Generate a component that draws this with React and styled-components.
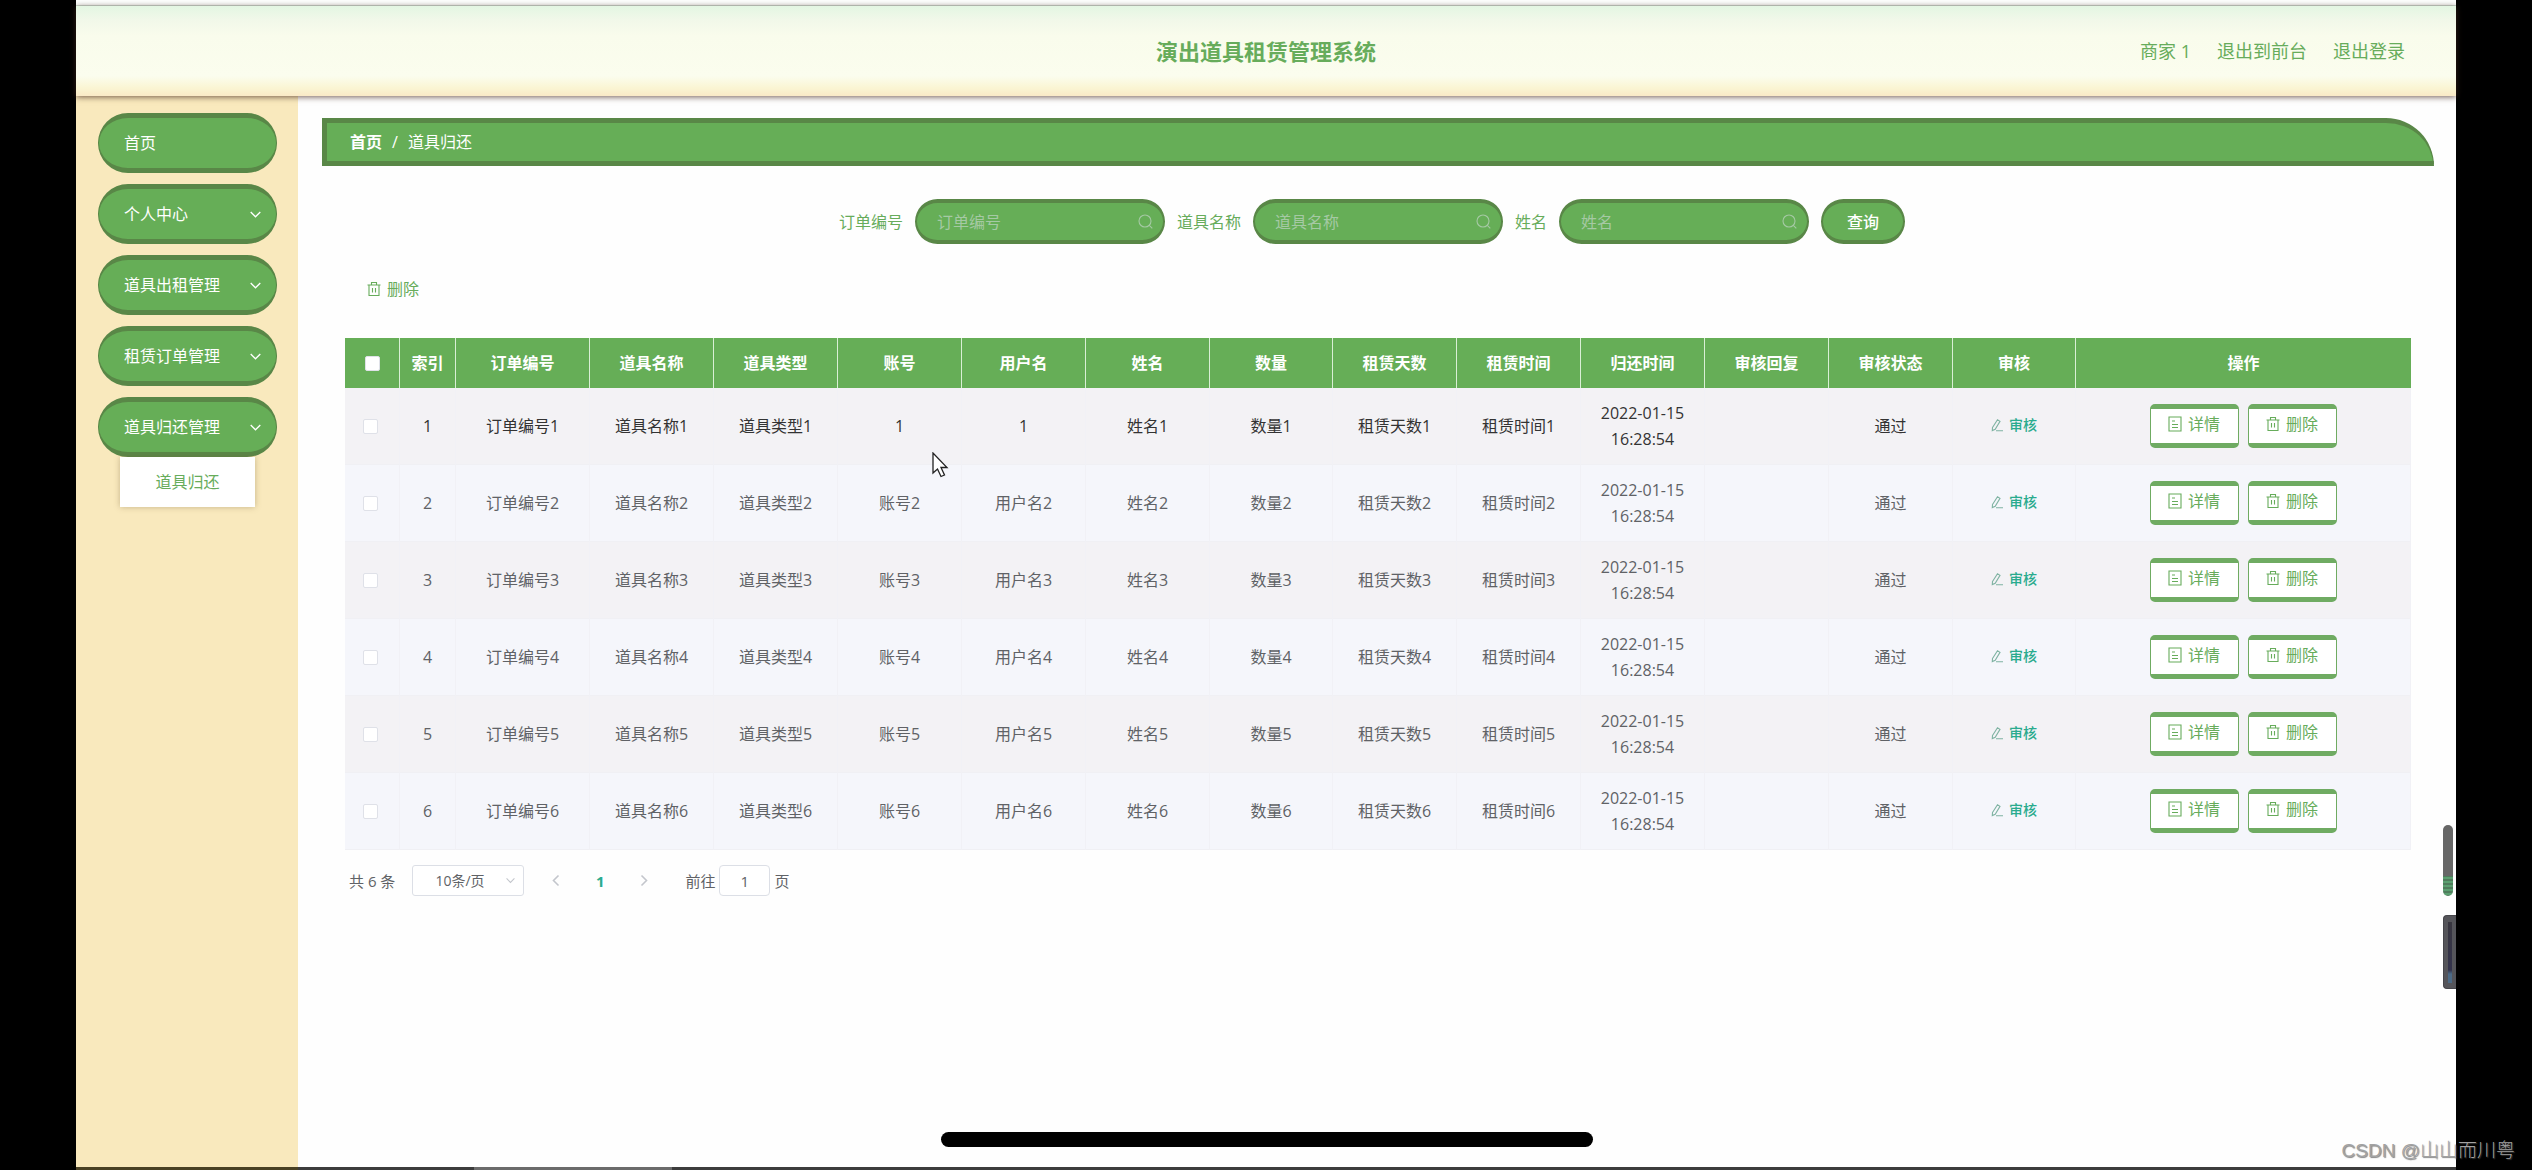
import React, { useState } from "react";
import styled, { createGlobalStyle, css } from "styled-components";

const c = {
  green: "#66ae57",
  edge: "#598747",
  text: "#67ac5b",
  cell: "#606266",
  muted: "#c3c6cc",
};

const GlobalStyle = createGlobalStyle`
  * { box-sizing: border-box; }
  body { margin: 0; background: #000; }
  body, button, input, select {
    font-family: "Open Sans", "Noto Sans CJK SC", sans-serif;
    font-size: 16px;
    line-height: 24px;
  }
  button, input, select { margin: 0; padding: 0; border: 0; background: none; color: inherit; }
  button { cursor: pointer; }
  a { color: inherit; text-decoration: none; }
`;

const Screen = styled.div`
  position: relative;
  min-height: 100vh;
  padding: 0 76px;
  display: flex;
  flex-direction: column;
`;

const TopStrip = styled.div`
  height: 6px;
  background: #fdfffe;
  border-bottom: 1px solid #d0e0d6;
`;

const Header = styled.header`
  position: relative;
  height: 90px;
  padding: 0 51px;
  display: grid;
  grid-template-columns: 1fr auto 1fr;
  align-items: center;
  color: ${c.text};
  background: linear-gradient(#e3f6e2 0, #f1f8e9 14px, #f9fcec 30px, #fbfdee 70px, #faf5d3 82px, #fae9c6 90px);
  box-shadow: 0 1px 6px rgba(70, 40, 30, 0.75);
`;

const Title = styled.h1`
  grid-column: 2;
  margin: 0;
  font-size: 22px;
  line-height: 32px;
  font-weight: 700;
`;

const UserNav = styled.nav`
  display: flex;
  justify-content: flex-end;
  gap: 26px;
  font-size: 18px;
`;

const Body = styled.div`
  flex: 1;
  display: flex;
`;

const Sidebar = styled.nav`
  flex: none;
  width: 222px;
  padding: 17px 21px 0 22px;
  background: #f9e9bd;
`;

const Menu = styled.ul`
  margin: 0;
  padding: 0;
  list-style: none;
  display: flex;
  flex-direction: column;
  gap: 11px;
`;

const MenuButton = styled.button`
  width: 100%;
  height: 60px;
  padding: 0 15px 0 25px;
  display: flex;
  align-items: center;
  justify-content: space-between;
  color: #fff;
  background: ${c.green};
  border: solid ${c.edge};
  border-width: 5px 1px;
  border-radius: 30px;
`;

const SubMenu = styled.div`
  margin: 0 22px;
  height: 50px;
  display: flex;
  align-items: center;
  justify-content: center;
  color: ${c.text};
  background: #fff;
  box-shadow: 0 0 6px rgba(120, 100, 60, 0.4);
`;

const Main = styled.main`
  flex: 1;
  min-width: 0;
  padding: 22px 22px 0 24px;
  background: #fefefe;
`;

const Breadcrumb = styled.nav`
  height: 48px;
  padding: 0 23px;
  display: flex;
  align-items: center;
  gap: 10px;
  color: #fff;
  background: ${c.green};
  border: solid ${c.edge};
  border-width: 5px 1px 5px 5px;
  border-top-right-radius: 48px;
`;

const Content = styled.section`
  padding: 33px 23px;
`;

const SearchForm = styled.form`
  display: flex;
  justify-content: center;
  align-items: center;
  gap: 12px;
  padding-right: 12px;
  color: ${c.text};
`;

const pill = css`
  height: 45px;
  color: #fff;
  background: ${c.green};
  border: solid ${c.edge};
  border-width: 4px 2px;
  border-radius: 23px;
`;

const Field = styled.span`
  ${pill}
  width: 250px;
  padding: 0 10px 0 20px;
  display: flex;
  align-items: center;
  svg { flex: none; color: #a5c9a4; }
`;

const FieldInput = styled.input`
  flex: 1;
  min-width: 0;
  outline: none;
  &::placeholder { color: #a5c9a4; opacity: 1; }
`;

const QueryButton = styled.button`
  ${pill}
  width: 84px;
  font-weight: 500;
`;

const Toolbar = styled.div`
  margin: 33px 0 37px;
  padding-left: 22px;
  display: flex;
`;

const TextButton = styled.button`
  display: inline-flex;
  align-items: center;
  gap: 6px;
  color: ${c.text};
`;

const Table = styled.table`
  width: 100%;
  table-layout: fixed;
  border-collapse: separate;
  border-spacing: 0;
  color: ${c.cell};
  text-align: center;
`;

const Col = styled.col`
  width: ${(p) => (p.$w ? `${p.$w}px` : "auto")};
`;

const HeadCell = styled.th`
  height: 50px;
  padding: 0;
  color: #fff;
  font-weight: 700;
  background: ${c.green};
  border-right: 1px solid #d9efd5;
  &:last-child { border-right: 0; }
`;

const Row = styled.tr`
  background: ${(p) => (p.$odd ? "#f3f2f5" : "#f5f6fb")};
  color: ${(p) => (p.$active ? "#333" : "inherit")};
`;

const Cell = styled.td`
  height: 77px;
  padding: 0 16px;
  line-height: 26px;
  border-right: 1px solid #f1f1f6;
  border-bottom: 1px solid #f0f0f4;
`;

const Tick = styled.input.attrs({ type: "checkbox" })`
  appearance: none;
  display: block;
  width: 15px;
  height: 15px;
  margin: 0 auto;
  background: #fff;
  border: 1px solid #dfe1e8;
  border-radius: 2px;
  &:checked { background: #2bab8f; }
`;

const TickCell = styled(Cell)`
  padding: 0 4px 0 0;
`;

const IndexCell = styled(Cell)`
  padding: 0;
`;

const AuditButton = styled.button`
  display: inline-flex;
  align-items: center;
  gap: 6px;
  font-size: 14px;
  font-weight: 500;
  color: #2aab8e;
  svg { color: #7fb3a2; }
`;

const Actions = styled.div`
  display: flex;
  justify-content: center;
  gap: 9px;
`;

const ActionButton = styled.button`
  width: 89px;
  height: 44px;
  padding-bottom: 4px;
  display: flex;
  align-items: center;
  justify-content: center;
  gap: 6px;
  color: ${c.text};
  background: #fff;
  border: solid #6fab62;
  border-width: 5px 1px;
  border-radius: 5px;
`;

const Pager = styled.div`
  margin-top: 15px;
  padding-left: 4px;
  display: flex;
  align-items: center;
  font-size: 15px;
  color: ${c.cell};
`;

const SizePicker = styled.span`
  width: 112px;
  height: 31px;
  margin-left: 17px;
  padding: 0 8px 0 22px;
  display: flex;
  align-items: center;
  background: #fff;
  border: 1px solid #dcdfe6;
  border-radius: 3px;
  color: ${c.muted};
`;

const SizeSelect = styled.select`
  flex: 1;
  min-width: 0;
  appearance: none;
  outline: none;
  font-size: 14px;
  color: ${c.cell};
`;

const PageButton = styled.button`
  width: 44px;
  height: 31px;
  display: flex;
  align-items: center;
  justify-content: center;
  font-size: 15px;
  font-weight: 700;
  color: ${(p) => (p.$current ? "#2aab8e" : c.muted)};
`;

const Pages = styled.span`
  margin: 0 19px 0 10px;
  display: flex;
`;

const Jump = styled.label`
  display: flex;
  align-items: center;
  gap: 4px;
`;

const JumpInput = styled.input`
  width: 51px;
  height: 31px;
  text-align: center;
  font-size: 15px;
  background: #fff;
  border: 1px solid #dcdfe6;
  border-radius: 4px;
`;

const TaskEdge = styled.div`
  height: 3px;
  flex: none;
  background: linear-gradient(90deg, #4a4124 0 222px, #3c3c3c 222px 398px, #6b6b6b 398px 596px, #3c3c3c 596px);
`;

const HomeIndicator = styled.div`
  position: absolute;
  bottom: 23px;
  left: 50%;
  width: 652px;
  height: 15px;
  margin-left: -325px;
  background: #000;
  border-radius: 8px;
`;

const Volume = styled.div`
  position: absolute;
  right: 79px;
  top: 825px;
  width: 10px;
  height: 71px;
  border-radius: 5px;
  background: linear-gradient(#676767 0 51px, transparent 51px),
    repeating-linear-gradient(#5b9f70 0 2px, #4f7d5c 2px 4px);
`;

const Meter = styled.div`
  position: absolute;
  right: 76px;
  top: 915px;
  width: 13px;
  height: 74px;
  padding: 6px 4px 5px;
  background: #55555a;
  border: 1px solid #45454a;
  border-right: 0;
  border-radius: 4px 0 0 4px;
  &::before {
    content: "";
    display: block;
    width: 4px;
    height: 100%;
    background: linear-gradient(#38363f, #33334c 48px, #4c6a86 52px);
  }
`;

const Watermark = styled.div`
  position: absolute;
  right: 17px;
  bottom: 6px;
  font-family: "Liberation Sans", "Noto Sans CJK SC", sans-serif;
  font-size: 19px;
  line-height: 26px;
  font-weight: 300;
  color: #a2a2a2;
  text-shadow: 1px 1px 1px rgba(80, 80, 80, 0.7);
`;

const Pointer = styled.svg`
  position: absolute;
  left: 932px;
  top: 452px;
`;

const Icon = ({ w = 14, h = 16, box = "0 0 14 16", children }) => (
  <svg width={w} height={h} viewBox={box} fill="none" stroke="currentColor" strokeWidth="1.1" aria-hidden="true">
    {children}
  </svg>
);

const Trash = () => (
  <Icon>
    <path d="M.5 4h13M4.500 4V1.500h5V4M2 4v10.500h10V4M5.500 7v4.500M8.500 7v4.500" />
  </Icon>
);

const Doc = () => (
  <Icon>
    <path d="M1 1h12v14H1zM4 5h3M4 8.500h6M4 11.500h6" />
  </Icon>
);

const Pen = () => (
  <Icon w={12} h={14} box="0 0 12 14">
    <path d="M1.500 9.500 6.500 1.800 9 3.400 4.200 11.200 1.300 12.500zM5 12.800h7" />
  </Icon>
);

const Search = () => (
  <Icon w={15} h={16} box="0 0 15 16">
    <circle cx="7" cy="7" r="6" />
    <path d="m11.300 11.300 3 3" />
  </Icon>
);

const Down = ({ size = 11 }) => (
  <Icon w={size} h={7} box="0 0 11 7">
    <path d="m.7 1 4.800 4.800L10.300 1" strokeWidth="1.300" />
  </Icon>
);

const Arrow = ({ flip }) => (
  <Icon w={8} h={13} box="0 0 8 13">
    <path d={flip ? "m1.500 1.500 5 5-5 5" : "m6.500 1.500-5 5 5 5"} strokeWidth="1.600" />
  </Icon>
);

const MENU = ["首页", "个人中心", "道具出租管理", "租赁订单管理", "道具归还管理"];
const FIELDS = ["订单编号", "道具名称", "姓名"];
const HEADS = ["订单编号", "道具名称", "道具类型", "账号", "用户名", "姓名", "数量", "租赁天数", "租赁时间", "归还时间", "审核回复", "审核状态", "审核", "操作"];
const WIDTHS = [55, 56, 134, 124, 124, 124, 124, 124, 123, 124, 124, 124, 124, 124, 123, 0];

const ROWS = [1, 2, 3, 4, 5, 6].map((n) => ({
  n,
  values: [
    `订单编号${n}`,
    `道具名称${n}`,
    `道具类型${n}`,
    n === 1 ? "1" : `账号${n}`,
    n === 1 ? "1" : `用户名${n}`,
    `姓名${n}`,
    `数量${n}`,
    `租赁天数${n}`,
    `租赁时间${n}`,
    "2022-01-15 16:28:54",
    "",
    "通过",
  ],
}));

export default function App() {
  const [page, setPage] = useState("1");
  return (
    <Screen>
      <GlobalStyle />
      <TopStrip />
      <Header>
        <Title>演出道具租赁管理系统</Title>
        <UserNav>
          <span>商家 1</span>
          <a href="#front">退出到前台</a>
          <a href="#logout">退出登录</a>
        </UserNav>
      </Header>
      <Body>
        <Sidebar>
          <Menu>
            {MENU.map((m, i) => (
              <li key={m}>
                <MenuButton type="button">
                  {m}
                  {i > 0 && <Down />}
                </MenuButton>
                {i === 4 && (
                  <SubMenu>
                    <a href="#return">道具归还</a>
                  </SubMenu>
                )}
              </li>
            ))}
          </Menu>
        </Sidebar>
        <Main>
          <Breadcrumb>
            <a href="#home"><b>首页</b></a>
            <span>/</span>
            <span>道具归还</span>
          </Breadcrumb>
          <Content>
            <SearchForm onSubmit={(e) => e.preventDefault()}>
              {FIELDS.map((f, i) => (
                <React.Fragment key={f}>
                  <label htmlFor={`field-${i}`}>{f}</label>
                  <Field>
                    <FieldInput id={`field-${i}`} placeholder={f} />
                    <Search />
                  </Field>
                </React.Fragment>
              ))}
              <QueryButton type="submit">查询</QueryButton>
            </SearchForm>
            <Toolbar>
              <TextButton type="button"><Trash />删除</TextButton>
            </Toolbar>
            <Table>
              <colgroup>
                {WIDTHS.map((w, i) => <Col key={i} $w={w} />)}
              </colgroup>
              <thead>
                <tr>
                  <HeadCell><Tick aria-label="全选" /></HeadCell>
                  <HeadCell>索引</HeadCell>
                  {HEADS.map((h) => <HeadCell key={h}>{h}</HeadCell>)}
                </tr>
              </thead>
              <tbody>
                {ROWS.map(({ n, values }) => (
                  <Row key={n} $odd={n % 2 === 1} $active={n === 1}>
                    <TickCell><Tick aria-label={`选择 ${n}`} /></TickCell>
                    <IndexCell>{n}</IndexCell>
                    {values.map((v, i) => <Cell key={i}>{v}</Cell>)}
                    <Cell>
                      <AuditButton type="button"><Pen />审核</AuditButton>
                    </Cell>
                    <Cell>
                      <Actions>
                        <ActionButton type="button"><Doc />详情</ActionButton>
                        <ActionButton type="button"><Trash />删除</ActionButton>
                      </Actions>
                    </Cell>
                  </Row>
                ))}
              </tbody>
            </Table>
            <Pager>
              <span>共 6 条</span>
              <SizePicker>
                <SizeSelect aria-label="每页条数">
                  <option>10条/页</option>
                </SizeSelect>
                <Down size={9} />
              </SizePicker>
              <Pages>
                <PageButton type="button" aria-label="上一页"><Arrow /></PageButton>
                <PageButton type="button" $current>1</PageButton>
                <PageButton type="button" aria-label="下一页"><Arrow flip /></PageButton>
              </Pages>
              <Jump>
                前往
                <JumpInput value={page} onChange={(e) => setPage(e.target.value)} />
                页
              </Jump>
            </Pager>
          </Content>
        </Main>
      </Body>
      <TaskEdge />
      <HomeIndicator />
      <Volume />
      <Meter />
      <Pointer width="18" height="26" viewBox="0 0 18 26" aria-hidden="true">
        <path d="M1 1v20l4.500-4 3.500 7.500 3.500-1.500-3.500-7.500H15z" fill="#fff" stroke="#222" strokeWidth="1.300" />
      </Pointer>
      <Watermark>CSDN @山山而川粤</Watermark>
    </Screen>
  );
}
